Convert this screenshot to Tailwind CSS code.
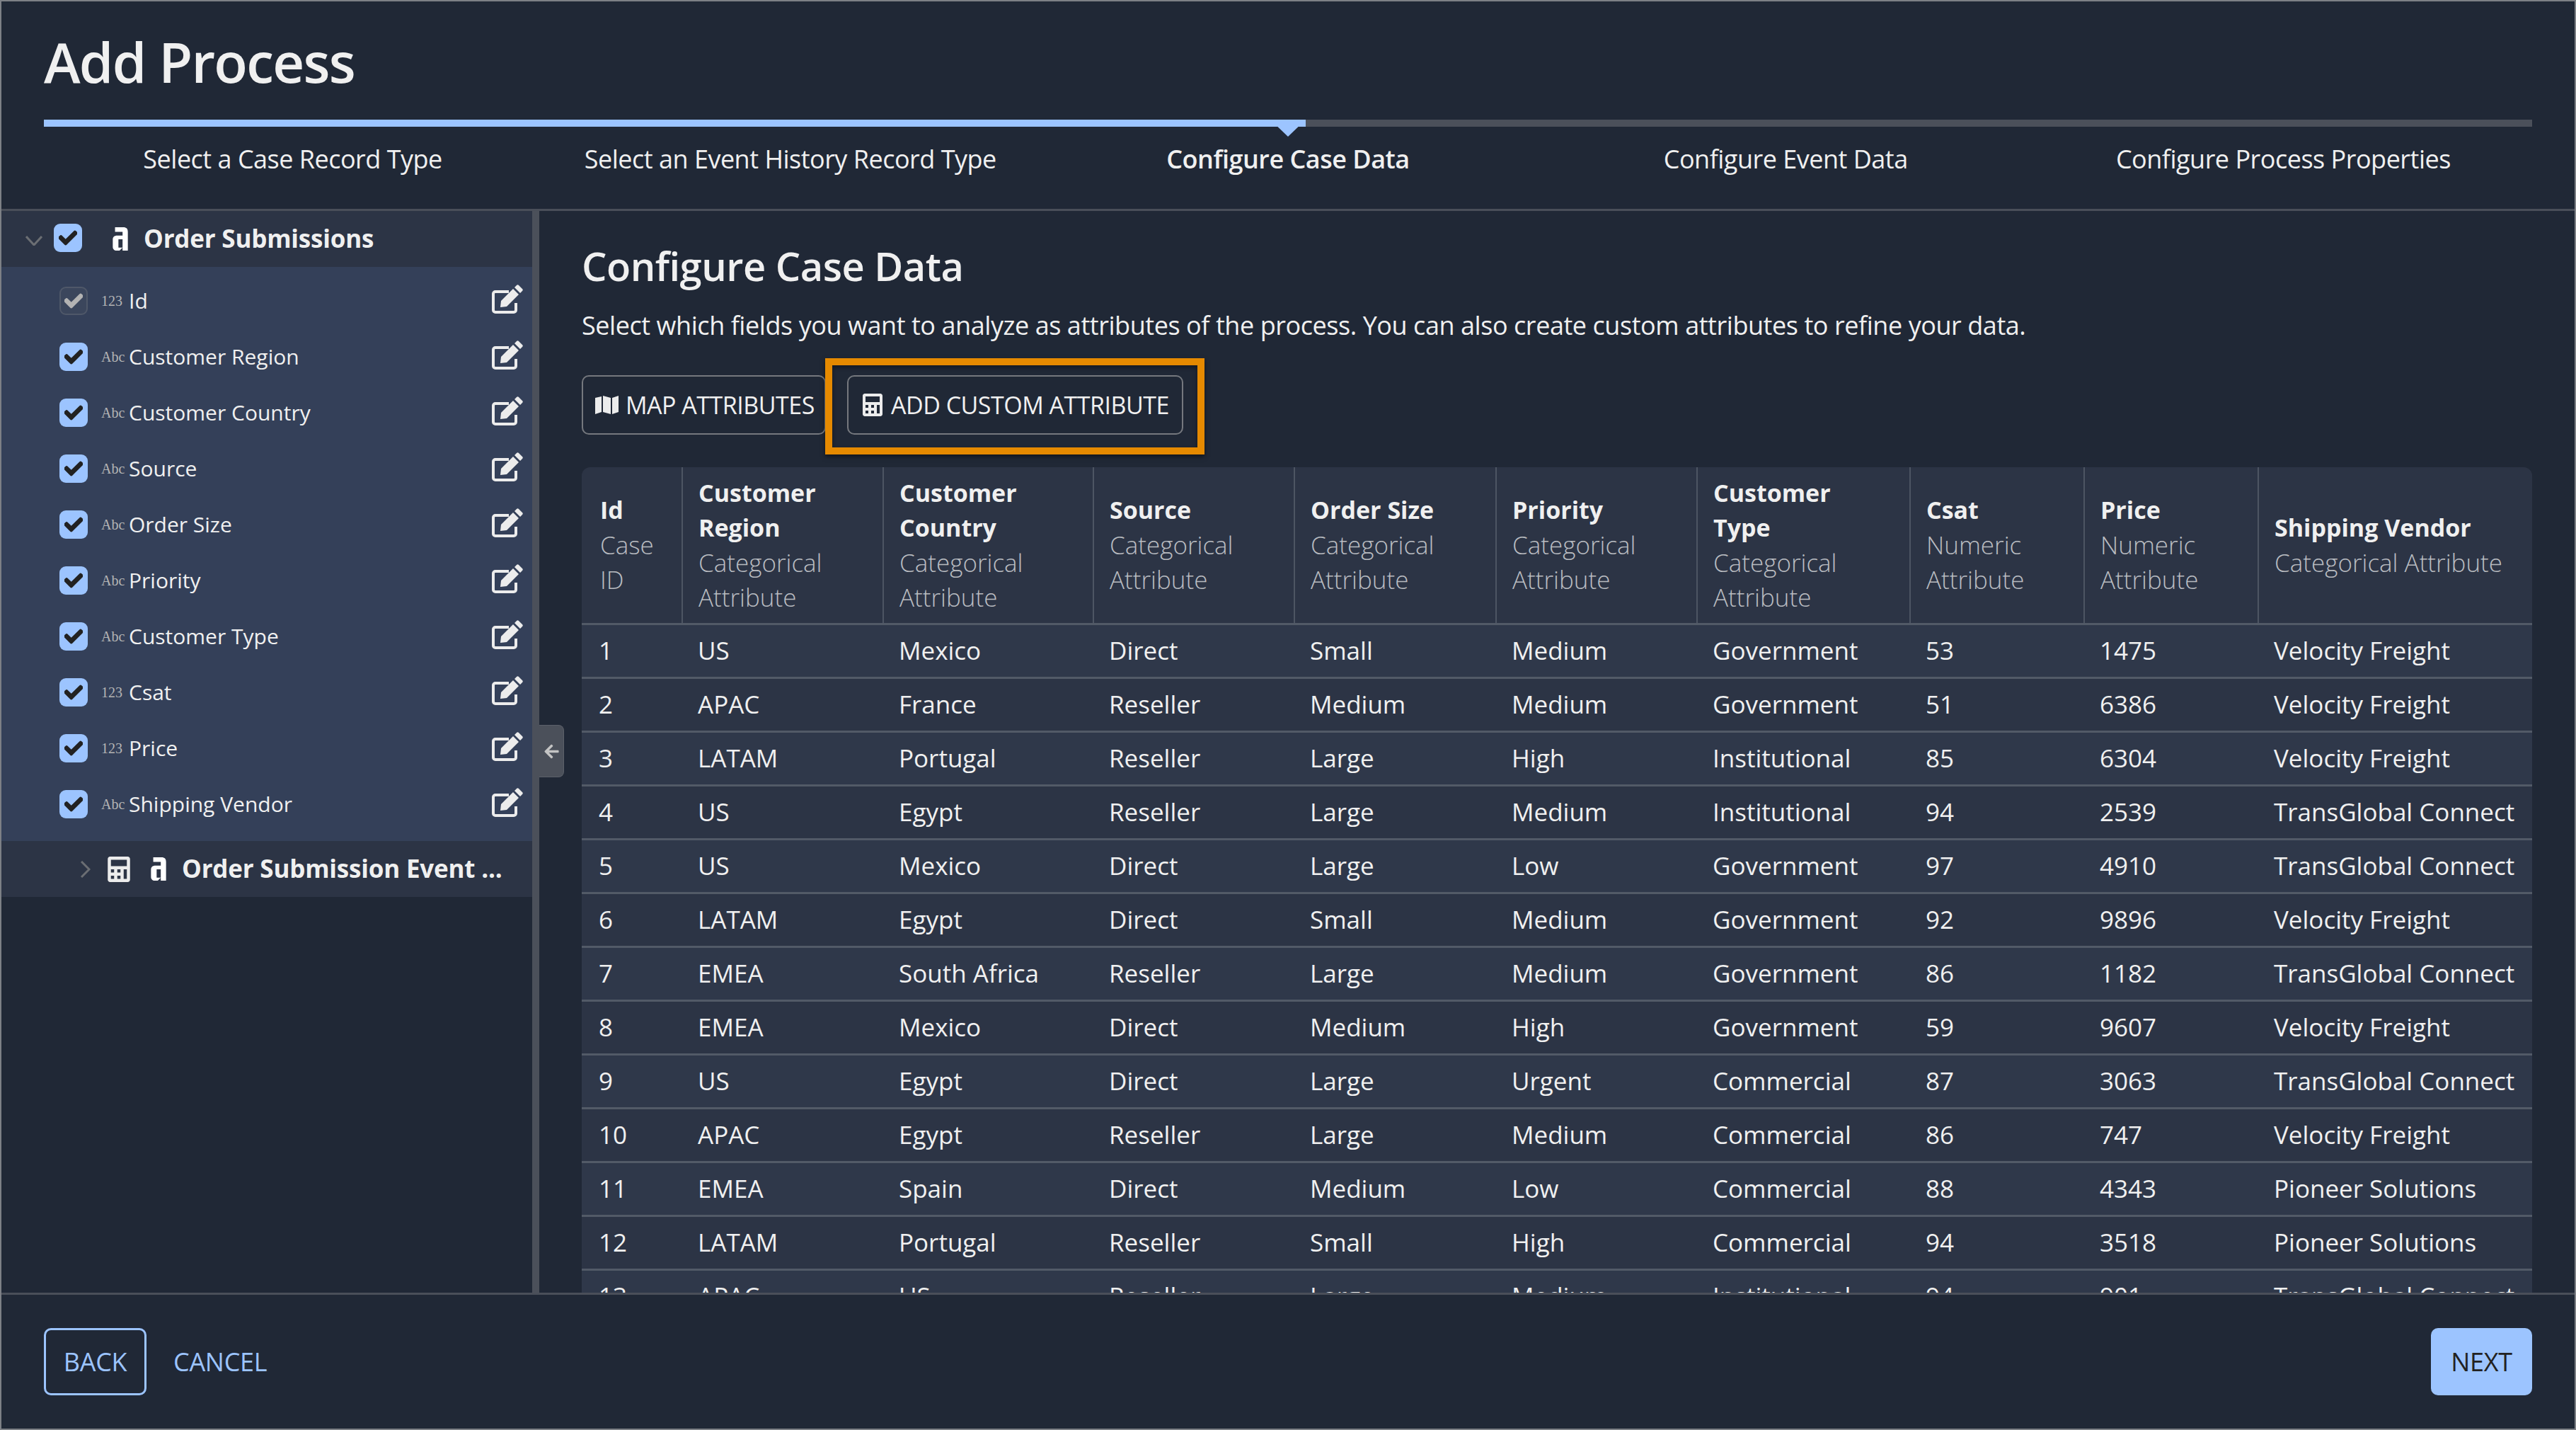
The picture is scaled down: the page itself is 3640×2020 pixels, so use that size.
<!DOCTYPE html>
<html lang="en">
<head>
    <meta charset="UTF-8">
    <title>Add Process</title>
    <script src="https://cdn.jsdelivr.net/npm/@tailwindcss/browser@4"></script>
</head>
<body class="bg-[#202836] font-['Open_Sans',sans-serif] text-[#f0f0f0]">
<div class="w-[3640px] h-[2020px] border-2 border-[#7d8086] flex flex-col overflow-hidden">

    <!-- header -->
    <div class="h-[296px] shrink-0 border-b-[3px] border-[#4a4f59] px-[60px]">
        <h1 class="pt-[35px] h-[167px] text-[78px] leading-[100px] font-semibold tracking-[-1.7px]">Add Process</h1>
        <div class="relative h-[10px] bg-[#4b505a]">
            <div class="h-[10px] w-[1783px] bg-[#9cc4ff]"></div>
            <svg class="absolute left-[1733px] top-0" width="50" height="24" viewBox="0 0 50 24"><polygon points="0,0 50,0 25,24" fill="#9cc4ff"/></svg>
        </div>
        <div class="grid grid-cols-5 text-center text-[36px] leading-[50px] pt-[21px] tracking-[-0.5px]">
            <div>Select a Case Record Type</div>
            <div>Select an Event History Record Type</div>
            <div class="font-semibold">Configure Case Data</div>
            <div>Configure Event Data</div>
            <div>Configure Process Properties</div>
        </div>
    </div>

    <!-- body -->
    <div class="flex-1 min-h-0 flex">
        <div class="relative w-[760px] shrink-0 border-r-[10px] border-[#4b505a]">
            <div class="h-[79px] bg-[#2c3445] flex items-center">
                <svg class="ml-[34px] w-[24px] h-[14px] mt-[4px]" viewBox="0 0 24 14" fill="none" stroke="#6b6e73" stroke-width="3"><path d="M1 1l11 12L23 1"/></svg>
                <span class="ml-[16px] mb-[4px] w-[40px] h-[40px] rounded-[9px] bg-[#9cc4ff] flex items-center justify-center">
                    <svg class="w-[26px] h-[26px]" viewBox="0 0 512 512" fill="#222" stroke="#222" stroke-width="30"><path d="M173.9 439.4L7.5 273c-10-10-10-26.2 0-36.2l36.2-36.2c10-10 26.2-10 36.2 0L192 312.7 432.1 72.6c10-10 26.2-10 36.2 0l36.2 36.2c10 10 10 26.2 0 36.2L210.1 439.4c-10 10-26.2 10-36.2 0z"/></svg>
                </span>
                <svg class="ml-[43px] w-[22px] h-[33px]" viewBox="0 0 20 31" fill="#fff"><path d="M3 0h11c4 0 6 2 6 6v25h-7V6H3zM6 11h7v5H7.500v11H13l-4 4H5c-3 0-5-2-5-5V16c0-3 2-5 6-5z"/></svg>
                <span class="ml-[22px] text-[35px] font-bold tracking-[-0.2px]">Order Submissions</span>
            </div>

            <div class="bg-[#344059] h-[811px] pt-[8px]">
                <div class="h-[79px] flex items-center pl-[82px]">
                    <span class="w-[40px] h-[40px] rounded-[9px] border-2 border-[#4f5869] bg-[#3b465c] flex items-center justify-center">
                        <svg class="w-[26px] h-[26px]" viewBox="0 0 512 512" fill="#b3b3b3" stroke="#b3b3b3" stroke-width="30"><path d="M173.9 439.4L7.5 273c-10-10-10-26.2 0-36.2l36.2-36.2c10-10 26.2-10 36.2 0L192 312.7 432.1 72.6c10-10 26.2-10 36.2 0l36.2 36.2c10 10 10 26.2 0 36.2L210.1 439.4c-10 10-26.2 10-36.2 0z"/></svg>
                    </span>
                    <span class="ml-[19px] w-[39px] font-['Liberation_Serif',serif] text-[20px] text-[#b5b5b5]">123</span>
                    <span class="flex-1 text-[30px]">Id</span>
                    <svg class="mr-[12px] mb-[4px] w-[46px] h-[42px]" viewBox="0 0 46 42" fill="none"><path d="M25 10H6a3 3 0 0 0-3 3v23a3 3 0 0 0 3 3h26a3 3 0 0 0 3-3V26" stroke="#ececec" stroke-width="4"/><path d="M13 32l1-9L31 6l8 8-17 17zM33 4l3-3c1-1 2-1 3 0l5 5c1 1 1 2 0 3l-3 3z" fill="#ececec"/></svg>
                </div>
            </div>

            <div class="h-[79px] bg-[#2c3445] flex items-center">
                <svg class="ml-[112px] w-[14px] h-[24px]" viewBox="0 0 14 24" fill="none" stroke="#6b6e73" stroke-width="3"><path d="M1 1l11 11L1 23"/></svg>
                <svg class="ml-[24px] w-[32px] h-[36px]" viewBox="0 0 448 512" fill="#ececec"><path fill-rule="evenodd" d="M48 0h352c26 0 48 22 48 48v416c0 26-22 48-48 48H48c-26 0-48-22-48-48V48C0 22 22 0 48 0zM64 64v128h320V64zM64 256v64h64v-64zM192 256v64h64v-64zM320 256v192h64V256zM64 384v64h64v-64zM192 384v64h64v-64z"/></svg>
                <svg class="ml-[29px] w-[22px] h-[33px]" viewBox="0 0 20 31" fill="#fff"><path d="M3 0h11c4 0 6 2 6 6v25h-7V6H3zM6 11h7v5H7.500v11H13l-4 4H5c-3 0-5-2-5-5V16c0-3 2-5 6-5z"/></svg>
                <span class="ml-[22px] text-[35px] font-bold tracking-[-0.2px] whitespace-nowrap">Order Submission Event ...</span>
            </div>

            <div class="absolute left-[760px] top-[726px] w-[35px] h-[74px] bg-[#4b505a] border border-l-0 border-[#5b6069] rounded-r-[8px] flex items-center justify-center">
                <svg class="w-[23px] h-[23px]" viewBox="0 0 448 512" fill="#c4c4c4"><path d="M257.500 445.100l-22.200 22.200c-9.400 9.400-24.600 9.400-33.900 0L7 273c-9.400-9.400-9.400-24.600 0-33.900L201.400 44.700c9.400-9.400 24.600-9.400 33.900 0l22.200 22.200c9.500 9.500 9.300 25-.4 34.300L136.600 216H424c13.300 0 24 10.700 24 24v32c0 13.300-10.700 24-24 24H136.600l120.500 114.800c9.800 9.300 10 24.800.4 34.300z"/></svg>
            </div>
        </div>

        <div class="flex-1 min-w-0 pl-[60px] pr-[60px] overflow-hidden">
            <h2 class="pt-[39px] text-[56px] leading-[76px] font-semibold tracking-[-0.5px]">Configure Case Data</h2>
            <p class="mt-[22px] text-[36px] leading-[50px] tracking-[-0.44px]">Select which fields you want to analyze as attributes of the process. You can also create custom attributes to refine your data.</p>

            <div class="flex mt-[45px] gap-[30px]">
                <button class="h-[84px] w-[345px] border-2 border-[#75787e] rounded-[10px] flex items-center pl-[17px] text-[34px] tracking-[-0.5px]">
                    <svg class="w-[33px] h-[26px] mr-[10px]" viewBox="0 0 33 26" fill="#ececec"><path d="M0 3l9-2v22l-9 3zM11 0l11 3v23l-11-3zM24 3l9-3v23l-9 3z"/></svg>
                    MAP ATTRIBUTES
                </button>
                <div class="relative">
                    <button class="h-[84px] w-[475px] border-2 border-[#75787e] rounded-[10px] flex items-center pl-[20px] text-[34px] tracking-[-0.5px]">
                        <svg class="w-[28px] h-[32px] mr-[12px]" viewBox="0 0 448 512" fill="#ececec"><path fill-rule="evenodd" d="M48 0h352c26 0 48 22 48 48v416c0 26-22 48-48 48H48c-26 0-48-22-48-48V48C0 22 22 0 48 0zM64 64v128h320V64zM64 256v64h64v-64zM192 256v64h64v-64zM320 256v192h64V256zM64 384v64h64v-64zM192 384v64h64v-64z"/></svg>
                        ADD CUSTOM ATTRIBUTE
                    </button>
                    <div class="absolute left-[-31px] top-[-24px] w-[536px] h-[136px] border-[10px] border-[#e68a00] shadow-[0_3px_6px_rgba(0,0,0,0.5),inset_0_3px_6px_rgba(0,0,0,0.4)]"></div>
                </div>
            </div>

            <div class="mt-[46px] rounded-t-[12px] bg-[#2c3445]">
                <table class="table-fixed border-collapse w-[2756px] text-[34px]">
                    <colgroup>
                        <col class="w-[142px]"><col class="w-[284px]"><col class="w-[297px]"><col class="w-[284px]"><col class="w-[285px]"><col class="w-[284px]"><col class="w-[301px]"><col class="w-[246px]"><col class="w-[246px]"><col class="w-[387px]">
                    </colgroup>
                    <thead>
                        <tr class="h-[221px] border-b-[3px] border-[#525a67] text-left align-middle leading-[49px]">
                            <th class="pl-[26px] pr-[10px] font-normal"><div class="font-bold">Id</div><div class="font-light text-[35px] text-[#b9bcc1]">Case ID</div></th>
                            <th class="pl-[22px] pr-[10px] font-normal border-l-2 border-[#4d5563]"><div class="font-bold">Customer Region</div><div class="font-light text-[35px] text-[#b9bcc1]">Categorical Attribute</div></th>
                            <th class="pl-[22px] pr-[10px] font-normal border-l-2 border-[#4d5563]"><div class="font-bold">Customer Country</div><div class="font-light text-[35px] text-[#b9bcc1]">Categorical Attribute</div></th>
                            <th class="pl-[22px] pr-[10px] font-normal border-l-2 border-[#4d5563]"><div class="font-bold">Source</div><div class="font-light text-[35px] text-[#b9bcc1]">Categorical Attribute</div></th>
                            <th class="pl-[22px] pr-[10px] font-normal border-l-2 border-[#4d5563]"><div class="font-bold">Order Size</div><div class="font-light text-[35px] text-[#b9bcc1]">Categorical Attribute</div></th>
                            <th class="pl-[22px] pr-[10px] font-normal border-l-2 border-[#4d5563]"><div class="font-bold">Priority</div><div class="font-light text-[35px] text-[#b9bcc1]">Categorical Attribute</div></th>
                            <th class="pl-[22px] pr-[40px] font-normal border-l-2 border-[#4d5563]"><div class="font-bold">Customer Type</div><div class="font-light text-[35px] text-[#b9bcc1]">Categorical Attribute</div></th>
                            <th class="pl-[22px] pr-[10px] font-normal border-l-2 border-[#4d5563]"><div class="font-bold">Csat</div><div class="font-light text-[35px] text-[#b9bcc1]">Numeric Attribute</div></th>
                            <th class="pl-[22px] pr-[10px] font-normal border-l-2 border-[#4d5563]"><div class="font-bold">Price</div><div class="font-light text-[35px] text-[#b9bcc1]">Numeric Attribute</div></th>
                            <th class="pl-[22px] pr-[10px] font-normal border-l-2 border-[#4d5563]"><div class="font-bold">Shipping Vendor</div><div class="font-light text-[35px] text-[#b9bcc1]">Categorical Attribute</div></th>
                        </tr>
                    </thead>
                    <tbody id="rows"></tbody>
                </table>
            </div>
        </div>
    </div>

    <!-- footer -->
    <div class="h-[192px] shrink-0 border-t-[3px] border-[#4a4f59] px-[60px] flex items-center text-[36px] tracking-[-0.3px]">
        <button class="h-[95px] w-[145px] border-[3px] border-[#9cc4ff] rounded-[10px] text-[#9cc4ff]">BACK</button>
        <button class="ml-[38px] text-[#9cc4ff]">CANCEL</button>
        <button class="ml-auto h-[95px] w-[143px] bg-[#9cc4ff] rounded-[10px] text-[#222]">NEXT</button>
    </div>
</div>

<script>
    // sidebar fields and table rows
    var vf = "Velocity Freight", tg = "TransGlobal Connect", ps = "Pioneer Solutions";
    var data = [
        [1,"US","Mexico","Direct","Small","Medium","Government",53,1475,vf],
        [2,"APAC","France","Reseller","Medium","Medium","Government",51,6386,vf],
        [3,"LATAM","Portugal","Reseller","Large","High","Institutional",85,6304,vf],
        [4,"US","Egypt","Reseller","Large","Medium","Institutional",94,2539,tg],
        [5,"US","Mexico","Direct","Large","Low","Government",97,4910,tg],
        [6,"LATAM","Egypt","Direct","Small","Medium","Government",92,9896,vf],
        [7,"EMEA","South Africa","Reseller","Large","Medium","Government",86,1182,tg],
        [8,"EMEA","Mexico","Direct","Medium","High","Government",59,9607,vf],
        [9,"US","Egypt","Direct","Large","Urgent","Commercial",87,3063,tg],
        [10,"APAC","Egypt","Reseller","Large","Medium","Commercial",86,747,vf],
        [11,"EMEA","Spain","Direct","Medium","Low","Commercial",88,4343,ps],
        [12,"LATAM","Portugal","Reseller","Small","High","Commercial",94,3518,ps],
        [13,"APAC","US","Reseller","Large","Medium","Institutional",94,901,tg]
    ];
    document.getElementById("rows").innerHTML = data.map(function(r, i) {
        var tds = r.map(function(v, j) {
            return '<td class="' + (j == 0 ? 'pl-[24px]' : 'pl-[22px]') + ' text-[35px] whitespace-nowrap">' + v + '</td>';
        }).join("");
        return '<tr class="h-[76px] border-b-[3px] border-[#525a67] ' + (i % 2 == 0 ? 'bg-[#2f384a]' : 'bg-[#2c3445]') + '">' + tds + '</tr>';
    }).join("");

    var fields = [["Abc","Customer Region"],["Abc","Customer Country"],["Abc","Source"],["Abc","Order Size"],["Abc","Priority"],["Abc","Customer Type"],["123","Csat"],["123","Price"],["Abc","Shipping Vendor"]];
    var list = document.querySelector(".bg-\\[\\#344059\\]");
    var tpl = list.firstElementChild;
    fields.forEach(function(f) {
        var row = tpl.cloneNode(true);
        var box = row.children[0];
        box.className = "w-[40px] h-[40px] rounded-[9px] bg-[#9cc4ff] flex items-center justify-center";
        box.querySelector("svg").setAttribute("fill", "#222");
        box.querySelector("svg").setAttribute("stroke", "#222");
        row.children[1].textContent = f[0];
        row.children[2].textContent = f[1];
        list.appendChild(row);
    });
</script>
</body>
</html>
